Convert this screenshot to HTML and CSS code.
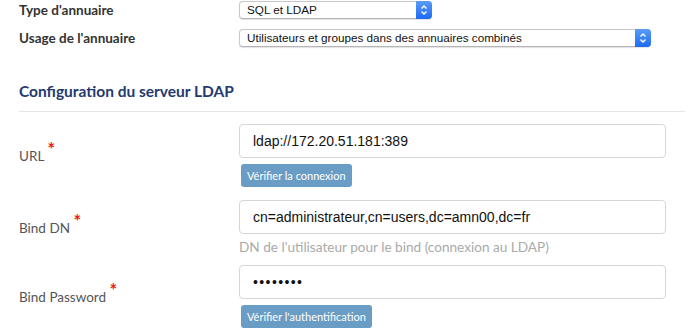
FILE: index.html
```html
<!DOCTYPE html>
<html lang="fr">
<head>
<meta charset="utf-8">
<title>Configuration LDAP</title>
<link rel="stylesheet" href="styles.css">
</head>
<body>
<div class="page">
  <div class="top">
    <div class="top-row">
      <div class="top-label">Type d'annuaire</div>
      <div class="select select-short">
        <span class="select-text">SQL et LDAP</span>
        <span class="select-arrow"><svg width="8" height="12" viewBox="0 0 8 12"><path d="M1.5 4.5 L4 2 L6.5 4.5 M1.5 7.5 L4 10 L6.5 7.5" fill="none" stroke="#fff" stroke-width="1.4"/></svg></span>
      </div>
    </div>
    <div class="top-row">
      <div class="top-label">Usage de l'annuaire</div>
      <div class="select select-long">
        <span class="select-text">Utilisateurs et groupes dans des annuaires combinés</span>
        <span class="select-arrow"><svg width="8" height="12" viewBox="0 0 8 12"><path d="M1.5 4.5 L4 2 L6.5 4.5 M1.5 7.5 L4 10 L6.5 7.5" fill="none" stroke="#fff" stroke-width="1.4"/></svg></span>
      </div>
    </div>
  </div>

  <h2 class="section-title">Configuration du serveur LDAP</h2>

  <div class="form">
    <div class="form-row row-url">
      <div class="label">URL <span class="req">*</span></div>
      <div class="field">
        <div class="input">ldap://172.20.51.181:389</div>
        <div class="btn">Vérifier la connexion</div>
      </div>
    </div>
    <div class="form-row row-dn">
      <div class="label">Bind DN <span class="req">*</span></div>
      <div class="field">
        <div class="input">cn=administrateur,cn=users,dc=amn00,dc=fr</div>
        <div class="help">DN de l'utilisateur pour le bind (connexion au LDAP)</div>
      </div>
    </div>
    <div class="form-row row-pw">
      <div class="label">Bind Password <span class="req">*</span></div>
      <div class="field">
        <div class="input input-pw">••••••••</div>
        <div class="btn">Vérifier l'authentification</div>
      </div>
    </div>
  </div>
</div>
</body>
</html>
```
FILE: styles.css
```css
html, body {
  margin: 0;
  padding: 0;
  background: #fff;
}
body {
  font-family: Lato, "Open Sans", sans-serif;
  color: #555;
  width: 689px;
  height: 335px;
  overflow: hidden;
}
.page {
  padding: 1px 0 0 19px;
}
.top {
  display: flex;
  flex-direction: column;
  gap: 10px;
}
.top-row {
  display: grid;
  grid-template-columns: 220px auto;
  align-items: center;
}
.top-label {
  font-weight: 700;
  font-size: 13.5px;
  color: #333;
  line-height: 18px;
}
.select {
  position: relative;
  height: 16px;
  border: 1px solid #c8c8c8;
  border-bottom-color: #b5b5b5;
  border-radius: 4px;
  background: #fff;
  box-shadow: 0 0.5px 1px rgba(0,0,0,0.12);
  display: flex;
  align-items: center;
}
.select-short { width: 191px; }
.select-long { width: 410px; }
.select-text {
  font-family: "Liberation Sans", Arial, sans-serif;
  font-size: 11.7px;
  color: #111;
  padding-left: 7px;
  line-height: 16px;
}
.select-arrow {
  position: absolute;
  right: -1px;
  top: -1px;
  width: 16px;
  height: 18px;
  border-radius: 0 4px 4px 0;
  background: linear-gradient(#5a9cf8, #1c6af2);
  display: flex;
  align-items: center;
  justify-content: center;
}
.section-title {
  margin: 34px 4px 0 0;
  padding: 0 0 10px 0;
  font-size: 15.5px;
  font-weight: 700;
  color: #243a6e;
  line-height: 20px;
  border-bottom: 1px solid #e5e5e5;
}
.form {
  display: flex;
  flex-direction: column;
  padding-top: 12px;
}
.form-row {
  display: grid;
  grid-template-columns: 220px 427px;
  align-items: center;
}
.row-url { margin-bottom: 13px; }
.row-dn { margin-bottom: 9px; }
.label {
  font-size: 13.5px;
  color: #555;
  line-height: 18px;
}
.req {
  color: #f01a14;
  font-weight: 700;
  font-size: 18px;
  vertical-align: 5px;
  line-height: 0;
}
.field {
  display: flex;
  flex-direction: column;
  align-items: flex-start;
}
.input {
  box-sizing: border-box;
  width: 427px;
  height: 34px;
  border: 1px solid #d6d6d6;
  border-radius: 4px;
  padding: 0 13px;
  display: flex;
  align-items: center;
  font-family: "Liberation Sans", Arial, sans-serif;
  font-size: 14px;
  color: #111;
}
.input-pw {
  font-size: 14px;
  letter-spacing: 1.4px;
  color: #111;
}
.btn {
  margin-top: 6px;
  margin-left: 2px;
  height: 23px;
  padding: 0 6px;
  background: #6a9dc5;
  color: #fff;
  border-radius: 3px;
  font-size: 11px;
  line-height: 23px;
}
.help {
  margin-top: 4px;
  font-size: 13.6px;
  color: #aaa;
  line-height: 18px;
}
```
